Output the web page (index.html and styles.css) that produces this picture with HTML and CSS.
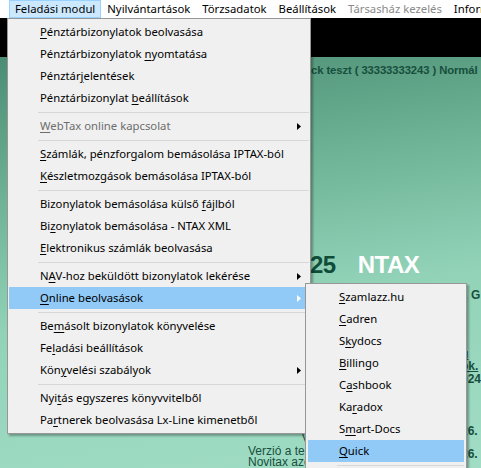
FILE: index.html
```html
<!DOCTYPE html>
<html lang="hu">
<head>
    <meta charset="UTF-8">
    <title>NTAX - Feladási modul</title>
    <link rel="stylesheet" href="styles.css">
</head>
<body>
    <!-- Top menu bar -->
    <nav class="menubar">
        <span class="menubar-item active">Feladási modul</span>
        <span class="menubar-item">Nyilvántartások</span>
        <span class="menubar-item">Törzsadatok</span>
        <span class="menubar-item">Beállítások</span>
        <span class="menubar-item disabled">Társasház kezelés</span>
        <span class="menubar-item">Információ</span>
    </nav>
    <div class="banner"></div>

    <!-- Application workspace behind the menus -->
    <main class="workspace">
        <p class="status">ck teszt ( 33333333243 ) Normál</p>
        <h1 class="title"><span class="year">25</span><span class="brand">NTAX</span></h1>
        <div class="details">
            <div class="notes">
                <p class="note-top">V</p>
                <p>Verzió a teszteléshez</p>
                <p>Novitax azonosító</p>
            </div>
            <div class="side">
                <p class="side-address">., G</p>
                <p class="side-link">u</p>
                <p class="side-link">ok.</p>
                <p>024</p>
                <p class="side-date">26.</p>
                <p class="side-date2">26.</p>
            </div>
        </div>
    </main>

    <!-- Feladási modul dropdown -->
    <ul class="dropdown main-menu">
        <li class="item"><u>P</u>énztárbizonylatok beolvasása</li>
        <li class="item">Pénztárbizonylatok <u>n</u>yomtatása</li>
        <li class="item">Pénztár<u>j</u>elentések</li>
        <li class="item">Pénztárbizonylat <u>b</u>eállítások</li>
        <li class="sep"></li>
        <li class="item disabled has-sub"><span><u>W</u>ebTax online kapcsolat</span>
            <svg class="arrow" width="4" height="7" viewBox="0 0 4 7"><polygon points="0,0 4,3.5 0,7" fill="#000"/></svg></li>
        <li class="sep"></li>
        <li class="item"><u>S</u>zámlák, pénzforgalom bemásolása IPTAX-ból</li>
        <li class="item"><u>K</u>észletmozgások bemásolása IPTAX-ból</li>
        <li class="sep"></li>
        <li class="item">Bizonylatok bemásolása külső <u>f</u>ájlból</li>
        <li class="item">Bi<u>z</u>onylatok bemásolása - NTAX XML</li>
        <li class="item"><u>E</u>lektronikus számlák beolvasása</li>
        <li class="sep"></li>
        <li class="item has-sub"><span>N<u>A</u>V-hoz beküldött bizonylatok lekérése</span>
            <svg class="arrow" width="4" height="7" viewBox="0 0 4 7"><polygon points="0,0 4,3.5 0,7" fill="#000"/></svg></li>
        <li class="item has-sub selected"><span><u>O</u>nline beolvasások</span>
            <svg class="arrow" width="4" height="7" viewBox="0 0 4 7"><polygon points="0,0 4,3.5 0,7" fill="#fff"/></svg></li>
        <li class="sep"></li>
        <li class="item">Be<u>m</u>ásolt bizonylatok könyvelése</li>
        <li class="item">Fe<u>l</u>adási beállítások</li>
        <li class="item has-sub"><span>Kön<u>y</u>velési szabályok</span>
            <svg class="arrow" width="4" height="7" viewBox="0 0 4 7"><polygon points="0,0 4,3.5 0,7" fill="#000"/></svg></li>
        <li class="sep"></li>
        <li class="item">Nyi<u>t</u>ás egyszeres könyvvitelből</li>
        <li class="item">Pa<u>r</u>tnerek beolvasása Lx-Line kimenetből</li>
    </ul>

    <!-- Online beolvasások submenu -->
    <ul class="dropdown sub-menu">
        <li class="item"><u>S</u>zamlazz.hu</li>
        <li class="item"><u>C</u>adren</li>
        <li class="item">S<u>k</u>ydocs</li>
        <li class="item"><u>B</u>illingo</li>
        <li class="item">C<u>a</u>shbook</li>
        <li class="item">Ka<u>r</u>adox</li>
        <li class="item">S<u>m</u>art-Docs</li>
        <li class="item selected"><u>Q</u>uick</li>
        <li class="sep"></li>
    </ul>
</body>
</html>
```

FILE: styles.css
```css
/* Reset */
* {
    margin: 0;
    padding: 0;
    box-sizing: border-box;
}
body {
    width: 481px;
    height: 468px;
    overflow: hidden;
    position: relative;
    font-family: "Noto Sans", sans-serif;
    font-size: 11.3px;
    color: #000;
    background: #9fdbc3;
}

/* Menu bar */
.menubar {
    height: 18px;
    display: flex;
    align-items: stretch;
    background: #fff;
    padding-left: 9px;
    white-space: nowrap;
    overflow: hidden;
}
.menubar-item {
    padding: 0 5px;
    line-height: 16px;
    border: 1px solid transparent;
}
.menubar-item.active {
    background: #cce8ff;
    border-color: #99d1ff;
}
.menubar-item.disabled {
    color: #8a8a8a;
}
.banner {
    height: 39px;
    background: #000;
}

/* Workspace */
.workspace {
    height: 411px;
    background: linear-gradient(172deg, #4b8d73 0%, #6eb396 30%, #92d3b8 58%, #a1ddc5 100%);
    font-family: "Liberation Sans", Arial, sans-serif;
    color: #174f3c;
    white-space: nowrap;
    overflow: hidden;
}
.status {
    padding: 6px 0 0 311px;
    font-size: 11.3px;
    letter-spacing: -0.1px;
    font-weight: bold;
    line-height: 14px;
}
.title {
    margin-top: 173px;
    padding-left: 310px;
    font-size: 24px;
    line-height: 29px;
    font-weight: bold;
    letter-spacing: -0.5px;
}
.title .year {
    color: #0f4d39;
}
.title .brand {
    color: #fff;
    margin-left: 22px;
}
.details {
    display: flex;
    margin-top: 9px;
}
.notes {
    width: 218px;
    margin-left: 248px;
    padding-top: 146px;
    font-size: 12px;
    line-height: 11.5px;
    overflow: hidden;
}
.notes .note-top {
    padding-left: 54px;
}
.side {
    font-size: 12px;
    font-weight: bold;
    line-height: 14px;
}
.side-address {
    margin-bottom: 46px;
}
.side-link {
    line-height: 12px;
    text-decoration: underline;
}
.side-date {
    margin-top: 38px;
}
.side-date2 {
    margin-top: 9px;
}

/* Dropdown menus */
.dropdown {
    position: absolute;
    list-style: none;
    background: #f0f0f0;
    border: 1px solid #979797;
    box-shadow: 2px 2px 2px rgba(0, 0, 0, 0.3);
    white-space: nowrap;
}
.main-menu {
    left: 7px;
    top: 18px;
    width: 304px;
    padding: 2px 1px;
}
.sub-menu {
    left: 305px;
    top: 283px;
    width: 162px;
    padding: 2px;
}
.item {
    height: 22px;
    line-height: 22px;
    padding-left: 31px;
    padding-right: 8px;
}
.item.has-sub {
    display: flex;
    align-items: center;
    justify-content: space-between;
}
.item.selected {
    background: #91c9f7;
}
.item.disabled {
    color: #6d6d6d;
}
.item u {
    text-underline-offset: 2px;
}
.sep {
    height: 6px;
    margin-left: 29px;
    border-top: 3px solid transparent;
}
.sep::before {
    content: "";
    display: block;
    height: 1px;
    background: #d7d7d7;
}
.arrow {
    display: block;
}
```
